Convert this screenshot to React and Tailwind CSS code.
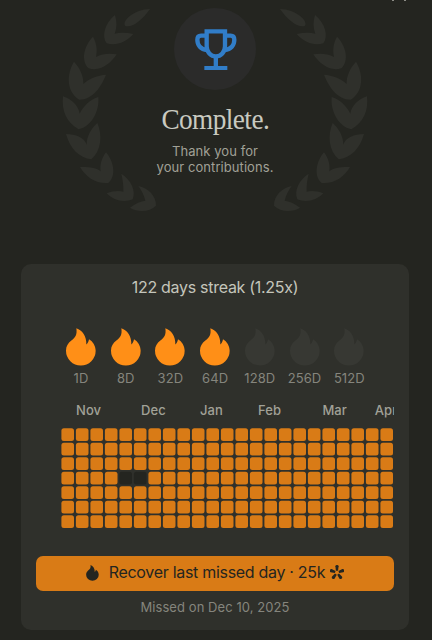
const milestones = [
  { label: '1D', reached: true },
  { label: '8D', reached: true },
  { label: '32D', reached: true },
  { label: '64D', reached: true },
  { label: '128D', reached: false },
  { label: '256D', reached: false },
  { label: '512D', reached: false },
];

const months = [
  { name: 'Nov', left: 15 },
  { name: 'Dec', left: 80 },
  { name: 'Jan', left: 139 },
  { name: 'Feb', left: 197 },
  { name: 'Mar', left: 261.4 },
  { name: 'Apr', left: 313.8 },
];

const WEEKS = 23;
const DAYS = 7;
const STEP = 14.5;
const missed = ['3-4', '3-5'];

function Flame({ className }) {
  return (
    <svg viewBox="33 174 90 113" className={className} fill="currentColor" aria-hidden="true">
      <path d="M64 174C82 180 95 198 94 223C98 219 101 213 102 207C114 214 122 227 122 242A44.5 44 0 0 1 33 242C33 228 39 219 49 211C61 202 67 194 64 174Z" />
    </svg>
  );
}

function Trophy() {
  return (
    <svg viewBox="134 86 126 124" className="mt-px ml-[2px] h-[41.3px] w-[42px] text-[#317dc8]" fill="none" stroke="currentColor" strokeWidth="13" aria-hidden="true">
      <path d="M169 93H224V138C224 155 212 168 196.500 168S169 155 169 138Z" />
      <path d="M169 106H152Q141 106 141 118C141 135 151 147 170 149" />
      <path d="M224 106H241Q252 106 252 118C252 135 242 147 223 149" />
      <path d="M196.500 168V203M162 203.500H231" />
    </svg>
  );
}

function Branch({ className }) {
  return (
    <svg viewBox="0 0 330 640" className={`h-[213.3px] w-[110px] text-[#2f302b] ${className}`} fill="currentColor" aria-hidden="true">
      <path d="M300 27C277 60 249 83 226 78C213 64 253 27 300 27Z" />
      <path d="M195 45C201 66 201 84 194 101C211 97 231 98 250 102C229 126 198 139 170 130C154 109 164 70 195 45Z" />
      <path d="M129 110C141 132 142 151 138 171C156 161 178 160 200 163C182 191 150 216 116 205C92 182 101 139 129 110Z" />
      <path d="M72 185C91 206 101 229 100 252C118 234 143 226 168 224C154 260 128 299 88 299C49 275 49 223 72 185Z" />
      <path d="M39 289C65 297 86 318 89 341C100 318 121 298 145 291C149 333 125 379 86 388C50 368 34 333 39 289Z" />
      <path d="M48 402C77 402 104 413 110 434C110 409 123 386 142 369C158 407 154 451 124 478C88 474 60 446 48 402Z" />
      <path d="M90 501C115 500 140 503 152 514C149 493 156 473 168 457C191 483 200 528 175 549C138 552 108 532 90 501Z" />
      <path d="M170 580C187 573 207 571 220 575C221 556 218 538 214 521C243 540 259 572 248 598C221 609 190 601 170 580Z" />
      <path d="M240 623C256 610 273 603 286 602C282 585 274 570 265 558C294 563 319 588 318 617C299 637 262 637 240 623Z" />
    </svg>
  );
}

function Petals() {
  return (
    <svg viewBox="0 0 26 26" className="h-[14px] w-[14px]" fill="currentColor" aria-hidden="true">
      {[0, 72, 144, 216, 288].map((angle) => (
        <path key={angle} d="M11 10.500L10 2.500Q10 0 13 0T16 2.500L15 10.500Z" transform={`rotate(${angle} 13 14)`} />
      ))}
    </svg>
  );
}

function Heatmap() {
  return (
    <svg width="333" height="101" viewBox="0 0 333 101" className="block" aria-hidden="true">
      {Array.from({ length: DAYS * WEEKS }, (_, i) => {
        const day = Math.floor(i / WEEKS);
        const week = i % WEEKS;
        return (
          <rect
            key={i}
            x={0.4 + week * STEP}
            y={0.3 + day * STEP}
            width="12.6"
            height="12.6"
            rx="2.5"
            className={missed.includes(`${day}-${week}`) ? 'fill-[#242520]' : 'fill-[#d97b16]'}
          />
        );
      })}
    </svg>
  );
}

export default function App() {
  return (
    <div className="h-[640px] w-full overflow-hidden bg-[#242520] font-['Inter',sans-serif]">
      <div className="relative w-[430px]">
        {/* Close button, scrolled almost out of view */}
        <div className="absolute top-0 left-[392px] flex w-[14px] justify-between">
          <span className="h-px w-[2px] bg-[#8c8c86]" />
          <span className="h-px w-[2px] bg-[#8c8c86]" />
        </div>

        {/* Header */}
        <header className="flex h-[264px] justify-between px-[50px]">
          <Branch className="shrink-0" />
          <div className="-mx-[10px] flex w-[130px] shrink-0 flex-col items-center pt-[8px]">
            <div className="flex h-[82px] w-[82px] shrink-0 items-center justify-center rounded-full bg-[#2b2b2a]">
              <Trophy />
            </div>
            <h1 className="mt-[14px] origin-center scale-x-[0.94] font-['Liberation_Serif',serif] text-[29px] leading-[30px] tracking-[-0.6px] text-[#c9cac0]">Complete.</h1>
            <p className="mt-[9px] text-center text-[13px] leading-[16px] tracking-[0.07px] whitespace-nowrap text-[#a1a197]">
              Thank you for
              <br />
              your contributions.
            </p>
          </div>
          <Branch className="shrink-0 -scale-x-100" />
        </header>

        {/* Streak card */}
        <section className="mx-[21px] flex h-[366px] flex-col rounded-[10px] bg-[#2f302b] px-[15px] pt-[13px]">
          <h2 className="text-center text-[16px] leading-[20px] tracking-[-0.29px] text-[#c4c5bb]">122 days streak (1.25x)</h2>

          <div className="mt-[31px] ml-[22.6px] flex w-[313px]">
            {milestones.map(({ label, reached }) => (
              <div key={label} className="flex flex-1 flex-col items-center">
                <Flame className={`h-[38px] w-[30px] ${reached ? 'text-[#ff8f17]' : 'text-[#373833]'}`} />
                <span className="mt-[4px] text-[13px] leading-[16px] tracking-[0.07px] text-[#85857d]">{label}</span>
              </div>
            ))}
          </div>

          <div className="mt-[16px] ml-[25px] w-[333px] overflow-hidden">
            <div className="relative h-[16px] text-[13px] leading-[16px] font-medium tracking-[0.07px] text-[#a1a197]">
              {months.map(({ name, left }) => (
                <span key={name} className="absolute top-0" style={{ left }}>{name}</span>
              ))}
            </div>
            <div className="mt-[10px]">
              <Heatmap />
            </div>
          </div>

          <button className="mt-[27px] flex h-[35px] w-full shrink-0 items-center justify-center rounded-[7px] bg-[#d97b16] text-[16px] leading-[20px] tracking-[-0.3px] text-[#242520]">
            <Flame className="-mt-px mr-[10px] h-[16px] w-[13px]" />
            <span className="-mt-[3px]">Recover last missed day · 25k</span>
            <span className="-mt-[3px] ml-[5px]"><Petals /></span>
          </button>
          <p className="mt-[8px] text-center text-[13px] leading-[16px] tracking-[0.07px] text-[#85857d]">Missed on Dec 10, 2025</p>
        </section>
      </div>
    </div>
  );
}
